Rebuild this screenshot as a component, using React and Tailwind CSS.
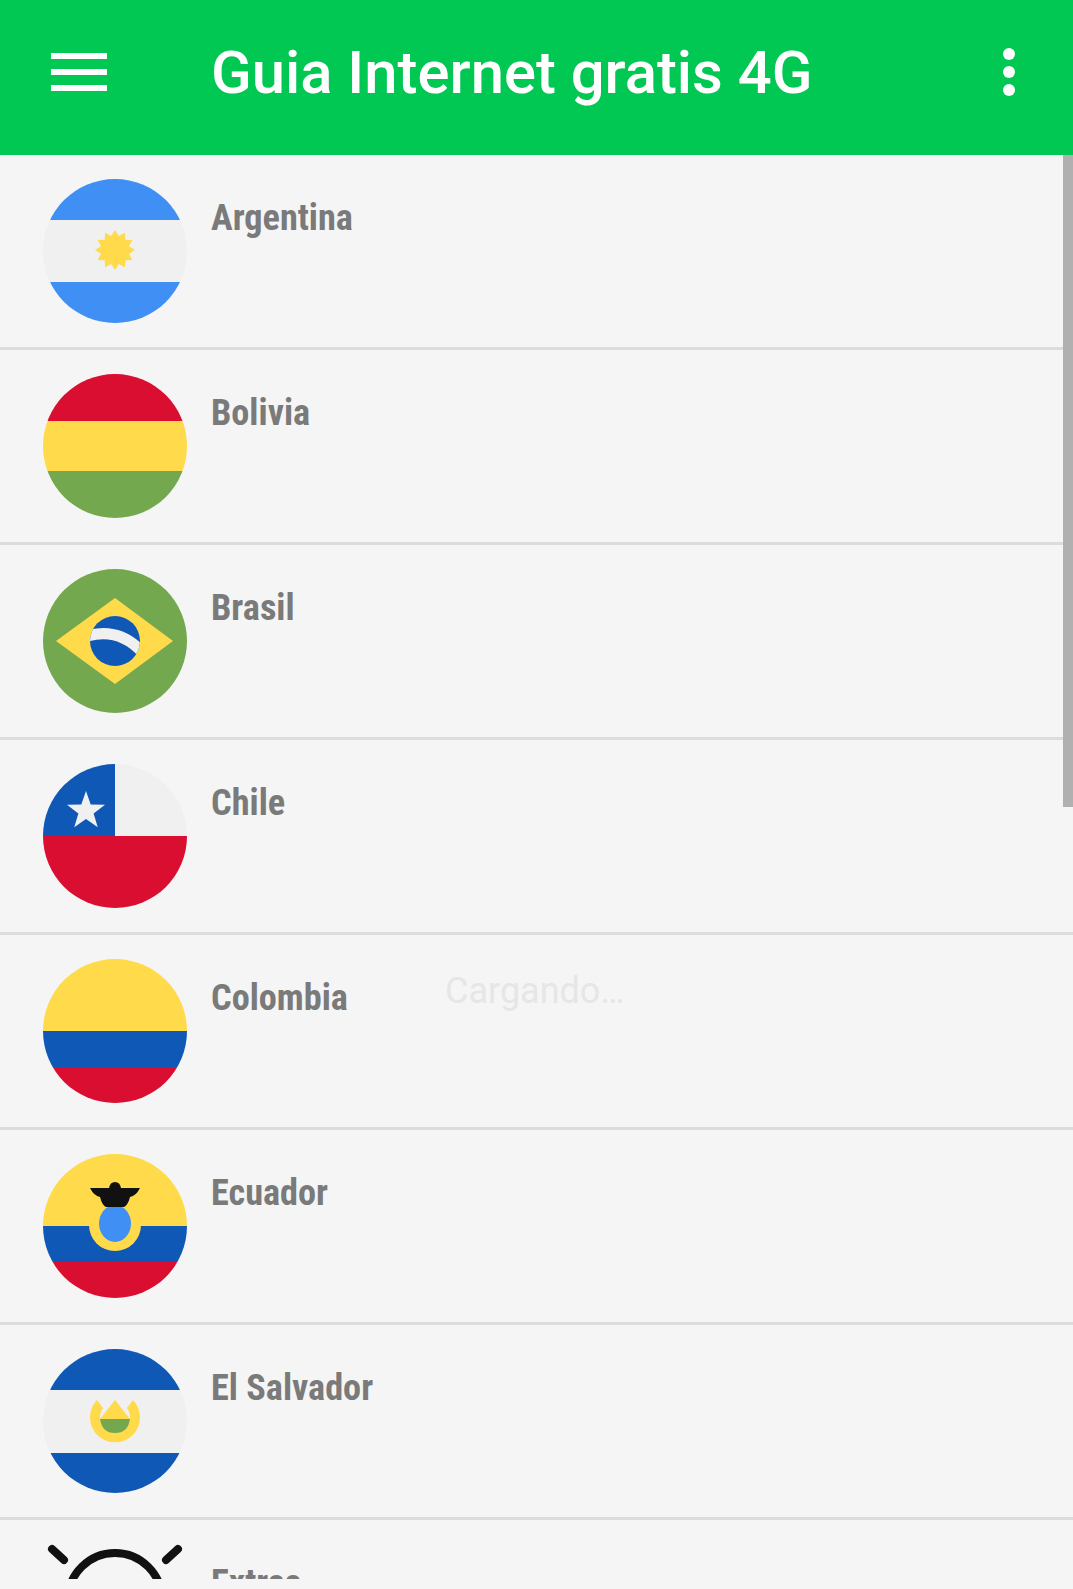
import React from 'react';

const BLUE = '#3f8ff5';
const NAVY = '#0f58b6';
const RED = '#d90e30';
const GREEN = '#74a84e';
const YELLOW = '#ffda4a';
const WHITE = '#f0f0f0';

// points for the stars and the sun, alternating outer and inner radius
const spikes = (cx, cy, outer, inner, count) => {
  const pts = [];
  for (let i = 0; i < count * 2; i++) {
    const r = i % 2 === 0 ? outer : inner;
    const a = (Math.PI * i) / count - Math.PI / 2;
    pts.push(`${(cx + r * Math.cos(a)).toFixed(2)},${(cy + r * Math.sin(a)).toFixed(2)}`);
  }
  return pts.join(' ');
};

const Flag = ({ id, children }) => (
  <svg width="144" height="144" viewBox="0 0 144 144" className="shrink-0 block">
    <defs>
      <clipPath id={id}>
        <circle cx="72" cy="72" r="72" />
      </clipPath>
    </defs>
    <g clipPath={`url(#${id})`}>{children}</g>
  </svg>
);

const Argentina = () => (
  <Flag id="ar">
    <rect width="144" height="144" fill={WHITE} />
    <rect width="144" height="41" fill={BLUE} />
    <rect y="103" width="144" height="41" fill={BLUE} />
    <polygon points={spikes(72, 71, 20, 14.5, 12)} fill={YELLOW} />
  </Flag>
);

const Bolivia = () => (
  <Flag id="bo">
    <rect width="144" height="47" fill={RED} />
    <rect y="47" width="144" height="50" fill={YELLOW} />
    <rect y="97" width="144" height="47" fill={GREEN} />
  </Flag>
);

const Brasil = () => (
  <Flag id="br">
    <rect width="144" height="144" fill={GREEN} />
    <polygon points="13,72 72,29 130,72 72,115" fill={YELLOW} />
    <circle cx="72" cy="72" r="25" fill={NAVY} />
    <clipPath id="br-globe">
      <circle cx="72" cy="72" r="25" />
    </clipPath>
    <path d="M44 67 Q76 58 99 83" fill="none" stroke={WHITE} strokeWidth="11" clipPath="url(#br-globe)" />
  </Flag>
);

const Chile = () => (
  <Flag id="cl">
    <rect width="144" height="144" fill={WHITE} />
    <rect width="72" height="72" fill={NAVY} />
    <rect y="72" width="144" height="72" fill={RED} />
    <polygon points={spikes(43, 47, 20, 8, 5)} fill={WHITE} />
  </Flag>
);

const Colombia = () => (
  <Flag id="co">
    <rect width="144" height="72" fill={YELLOW} />
    <rect y="72" width="144" height="36" fill={NAVY} />
    <rect y="108" width="144" height="36" fill={RED} />
  </Flag>
);

const Ecuador = () => (
  <Flag id="ec">
    <rect width="144" height="72" fill={YELLOW} />
    <rect y="72" width="144" height="36" fill={NAVY} />
    <rect y="108" width="144" height="36" fill={RED} />
    <circle cx="72" cy="71" r="26" fill={YELLOW} />
    <ellipse cx="72" cy="69.5" rx="16" ry="18.5" fill={BLUE} />
    <path d="M47 34 H66 Q67 28 72 28 Q77 28 78 34 H97 Q93 42 87 43 Q85 51 81 53 H63 Q59 51 57 43 Q51 42 47 34 Z" fill="#111" />
  </Flag>
);

const Salvador = () => (
  <Flag id="sv">
    <rect width="144" height="144" fill={WHITE} />
    <rect width="144" height="41" fill={NAVY} />
    <rect y="104" width="144" height="40" fill={NAVY} />
    <path d="M54 51 A25 25 0 1 0 90 51 L84 59 A15 15 0 1 1 60 59 Z" fill={YELLOW} />
    <polygon points="72,51 87,70 57,70" fill={YELLOW} />
    <path d="M57 70 H87 Q85 84 72 84 Q59 84 57 70 Z" fill={GREEN} />
  </Flag>
);

const Bulb = () => (
  <svg width="144" height="144" viewBox="0 0 144 144" className="shrink-0 block" fill="none" stroke="#111" strokeWidth="8" strokeLinecap="round">
    <circle cx="72" cy="56" r="47" />
    <path d="M9 5 L21 16" />
    <path d="M135 5 L123 16" />
  </svg>
);

const countries = [
  { name: 'Argentina', flag: <Argentina /> },
  { name: 'Bolivia', flag: <Bolivia /> },
  { name: 'Brasil', flag: <Brasil /> },
  { name: 'Chile', flag: <Chile /> },
  { name: 'Colombia', flag: <Colombia /> },
  { name: 'Ecuador', flag: <Ecuador /> },
  { name: 'El Salvador', flag: <Salvador /> },
  { name: 'Extras', flag: <Bulb /> },
];

const App = () => {
  return (
    <div className="relative w-[1073px] h-[1589px] overflow-hidden bg-[#f5f5f5] font-['Roboto',sans-serif]">
      {/* Toolbar */}
      <header className="h-[155px] bg-[#00c853] flex items-center pl-[51px] pr-[58px] pb-[11px] text-white">
        <svg width="56" height="38" viewBox="0 0 56 38" fill="#fff" className="shrink-0">
          <rect width="56" height="6" />
          <rect y="16" width="56" height="6" />
          <rect y="32" width="56" height="6" />
        </svg>
        <h1 className="ml-[104px] mt-[3px] flex-1 text-[59.8px] leading-none font-medium">Guia Internet gratis 4G</h1>
        <svg width="12" height="48" viewBox="0 0 12 48" fill="#fff" className="shrink-0">
          <circle cx="6" cy="6" r="6" />
          <circle cx="6" cy="24" r="6" />
          <circle cx="6" cy="42" r="6" />
        </svg>
      </header>

      {/* Country list */}
      <div className="h-[1424px] overflow-hidden">
        {countries.map((c) => (
          <div key={c.name} className="h-[195px] border-b-[3px] border-[#dcdcdc] flex gap-6 pl-[43px] pt-6">
            {c.flag}
            <span className="mt-[17px] text-[36.25px] leading-[44px] font-bold text-[#7a7a7a] [font-stretch:75%]">{c.name}</span>
          </div>
        ))}
      </div>

      {/* Overlays */}
      <div className="absolute left-[445px] top-[969px] text-[36px] leading-[44px] text-[#e6e6e6]">Cargando…</div>
      <div className="absolute left-[1063px] top-[155px] w-[10px] h-[652px] bg-[#b0b0b0]" />
    </div>
  );
};

export default App;
